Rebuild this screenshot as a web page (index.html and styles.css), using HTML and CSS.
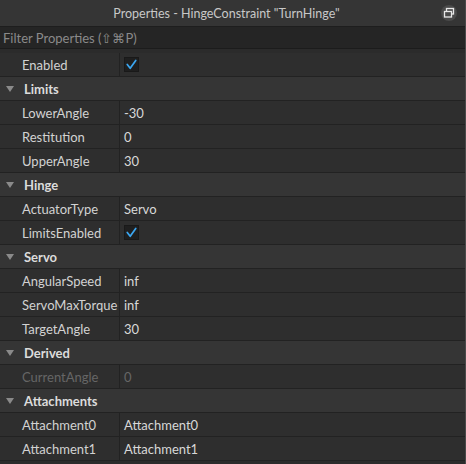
FILE: index.html
```html
<!DOCTYPE html>
<html>
<head>
<meta charset="utf-8">
<link rel="stylesheet" href="styles.css">
</head>
<body>
<div class="panel">
  <div class="titlebar">
    <span class="title">Properties - HingeConstraint "TurnHinge"</span>
    <span class="restore"><svg width="12" height="12" viewBox="0 0 12 12"><rect x="3.5" y="1.5" width="7" height="5.5" fill="none" stroke="#e8e8e8" stroke-width="1.3"/><rect x="1.5" y="4.5" width="7" height="5.5" fill="#4a4a4a" stroke="#e8e8e8" stroke-width="1.3"/></svg></span>
  </div>
  <div class="filter">Filter Properties (⇧⌘P)</div>
  <div class="list">
    <div class="row"><div class="name">Enabled</div><div class="val"><span class="check"><svg width="15" height="15" viewBox="0 0 15 15"><path d="M2.6 7.4 L6 11.8 L12.4 2.8" fill="none" stroke="#3ba6f0" stroke-width="2" stroke-linecap="round" stroke-linejoin="round"/></svg></span></div></div>
    <div class="cat"><span class="tri"></span>Limits</div>
    <div class="row"><div class="name">LowerAngle</div><div class="val">-30</div></div>
    <div class="row"><div class="name">Restitution</div><div class="val">0</div></div>
    <div class="row"><div class="name">UpperAngle</div><div class="val">30</div></div>
    <div class="cat"><span class="tri"></span>Hinge</div>
    <div class="row"><div class="name">ActuatorType</div><div class="val">Servo</div></div>
    <div class="row"><div class="name">LimitsEnabled</div><div class="val"><span class="check"><svg width="15" height="15" viewBox="0 0 15 15"><path d="M2.6 7.4 L6 11.8 L12.4 2.8" fill="none" stroke="#3ba6f0" stroke-width="2" stroke-linecap="round" stroke-linejoin="round"/></svg></span></div></div>
    <div class="cat"><span class="tri"></span>Servo</div>
    <div class="row"><div class="name">AngularSpeed</div><div class="val">inf</div></div>
    <div class="row"><div class="name">ServoMaxTorque</div><div class="val">inf</div></div>
    <div class="row"><div class="name">TargetAngle</div><div class="val">30</div></div>
    <div class="cat"><span class="tri"></span>Derived</div>
    <div class="row disabled"><div class="name">CurrentAngle</div><div class="val">0</div></div>
    <div class="cat"><span class="tri"></span>Attachments</div>
    <div class="row"><div class="name">Attachment0</div><div class="val">Attachment0</div></div>
    <div class="row"><div class="name">Attachment1</div><div class="val">Attachment1</div></div>
  </div>
</div>
</body>
</html>
```
FILE: styles.css
```css
html, body {
  margin: 0;
  padding: 0;
  background: #2b2b2b;
}
.panel {
  width: 466px;
  height: 464px;
  overflow: hidden;
  font-family: Lato, "Open Sans", sans-serif;
  font-size: 13px;
  color: #cccccc;
  background: #2b2b2b;
  border-right: 1px solid #4a4a4a;
  box-sizing: border-box;
}
.titlebar {
  height: 26px;
  background: #353535;
  border-bottom: 1px solid #1e1e1e;
  display: flex;
  align-items: center;
  justify-content: center;
  position: relative;
}
.title {
  color: #c8c8c8;
  font-size: 12.5px;
  margin-right: 12px;
}
.restore {
  position: absolute;
  right: 8px;
  top: 5px;
  width: 16px;
  height: 16px;
  border-radius: 50%;
  background: #4a4a4a;
  display: flex;
  align-items: center;
  justify-content: center;
}
.filter {
  height: 21px;
  background: #252525;
  border-bottom: 1px solid #1c1c1c;
  color: #8a8a8a;
  padding-left: 3px;
  display: flex;
  align-items: center;
}
.list {
  padding-top: 4px;
}
.row, .cat {
  height: 23px;
  border-bottom: 1px solid #222222;
  display: flex;
  align-items: center;
  background: #2e2e2e;
}
.name {
  width: 97px;
  padding-left: 22px;
  height: 100%;
  display: flex;
  align-items: center;
  border-right: 1px solid #222222;
  color: #d2d2d2;
}
.val {
  padding-left: 4px;
  display: flex;
  align-items: center;
  color: #d8d8d8;
}
.disabled .name, .disabled .val {
  color: #666666;
}
.cat {
  background: #353535;
  font-weight: bold;
  color: #dcdcdc;
  padding-left: 6px;
}
.tri {
  width: 0;
  height: 0;
  border-left: 4px solid transparent;
  border-right: 4px solid transparent;
  border-top: 6px solid #8a8a8a;
  margin-right: 10px;
}
.check {
  width: 15px;
  height: 15px;
  background: #1f1f1f;
  border: 1px solid #191919;
  box-sizing: border-box;
  display: flex;
  align-items: center;
  justify-content: center;
}
.check svg { display: block; }
```
